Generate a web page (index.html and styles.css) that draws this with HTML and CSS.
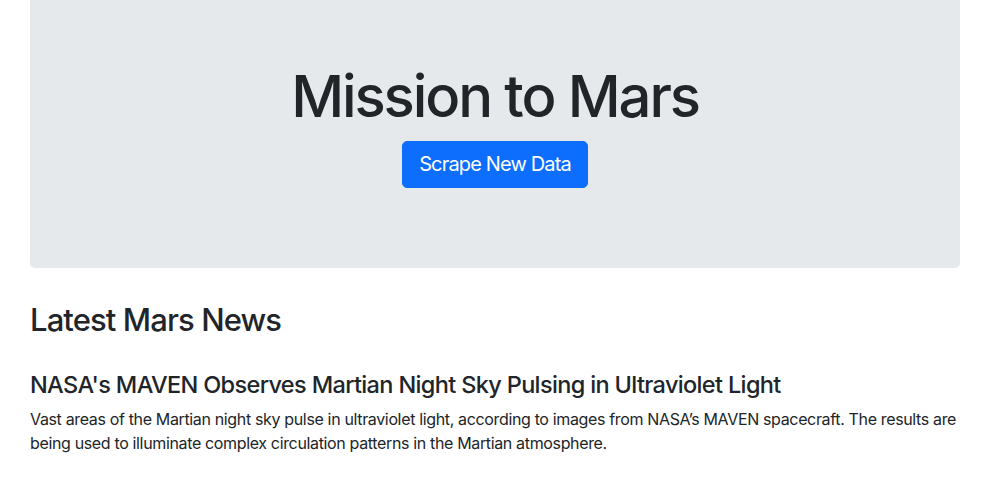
FILE: index.html
```html
<!DOCTYPE html>
<html lang="en">
<head>
<meta charset="utf-8">
<title>Mission to Mars</title>
<link rel="stylesheet" href="styles.css">
</head>
<body>
<main class="page">
  <section class="hero">
    <h1 class="hero-title">Mission to Mars</h1>
    <a class="btn-scrape" href="#">Scrape New Data</a>
  </section>
  <section class="news">
    <h2 class="news-heading">Latest Mars News</h2>
    <div class="news-item">
      <h4 class="news-title">NASA's MAVEN Observes Martian Night Sky Pulsing in Ultraviolet Light</h4>
      <p class="news-body">Vast areas of the Martian night sky pulse in ultraviolet light, according to images from NASA’s MAVEN spacecraft. The results are being used to illuminate complex circulation patterns in the Martian atmosphere.</p>
    </div>
  </section>
</main>
</body>
</html>
```
FILE: styles.css
```css
* { box-sizing: border-box; }
html, body { margin: 0; padding: 0; background: #fff; }
body {
  font-family: Inter, "Noto Sans", sans-serif;
  color: #212529;
  font-size: 16px;
  line-height: 1.5;
}
.page {
  padding: 0 29px 0 30px;
}
.hero {
  background: #e6e9ec;
  border-radius: 0 0 5px 5px;
  padding: 62px 32px 80px;
  display: flex;
  flex-direction: column;
  align-items: center;
}
.hero-title {
  margin: 0 0 9px;
  font-size: 58px;
  font-weight: 500;
  line-height: 1.2;
  letter-spacing: -2.1px;
}
.btn-scrape {
  display: inline-block;
  background: #0d6efd;
  color: #fff;
  text-decoration: none;
  font-size: 20px;
  line-height: 29px;
  padding: 8px 16px;
  border: 1px solid #0d6efd;
  border-radius: 5px;
  letter-spacing: -0.85px;
}
.news { padding-top: 33px; }
.news-heading {
  margin: 0 0 8px;
  font-size: 31px;
  font-weight: 500;
  line-height: 1.2;
  letter-spacing: -0.9px;
}
.news-item { padding-top: 25px; }
.news-title {
  margin: 0 0 8px;
  font-size: 23.5px;
  font-weight: 500;
  line-height: 1.2;
  letter-spacing: -0.65px;
}
.news-body {
  margin: 0;
  font-size: 16px;
  line-height: 24px;
  letter-spacing: -0.35px;
}
```
